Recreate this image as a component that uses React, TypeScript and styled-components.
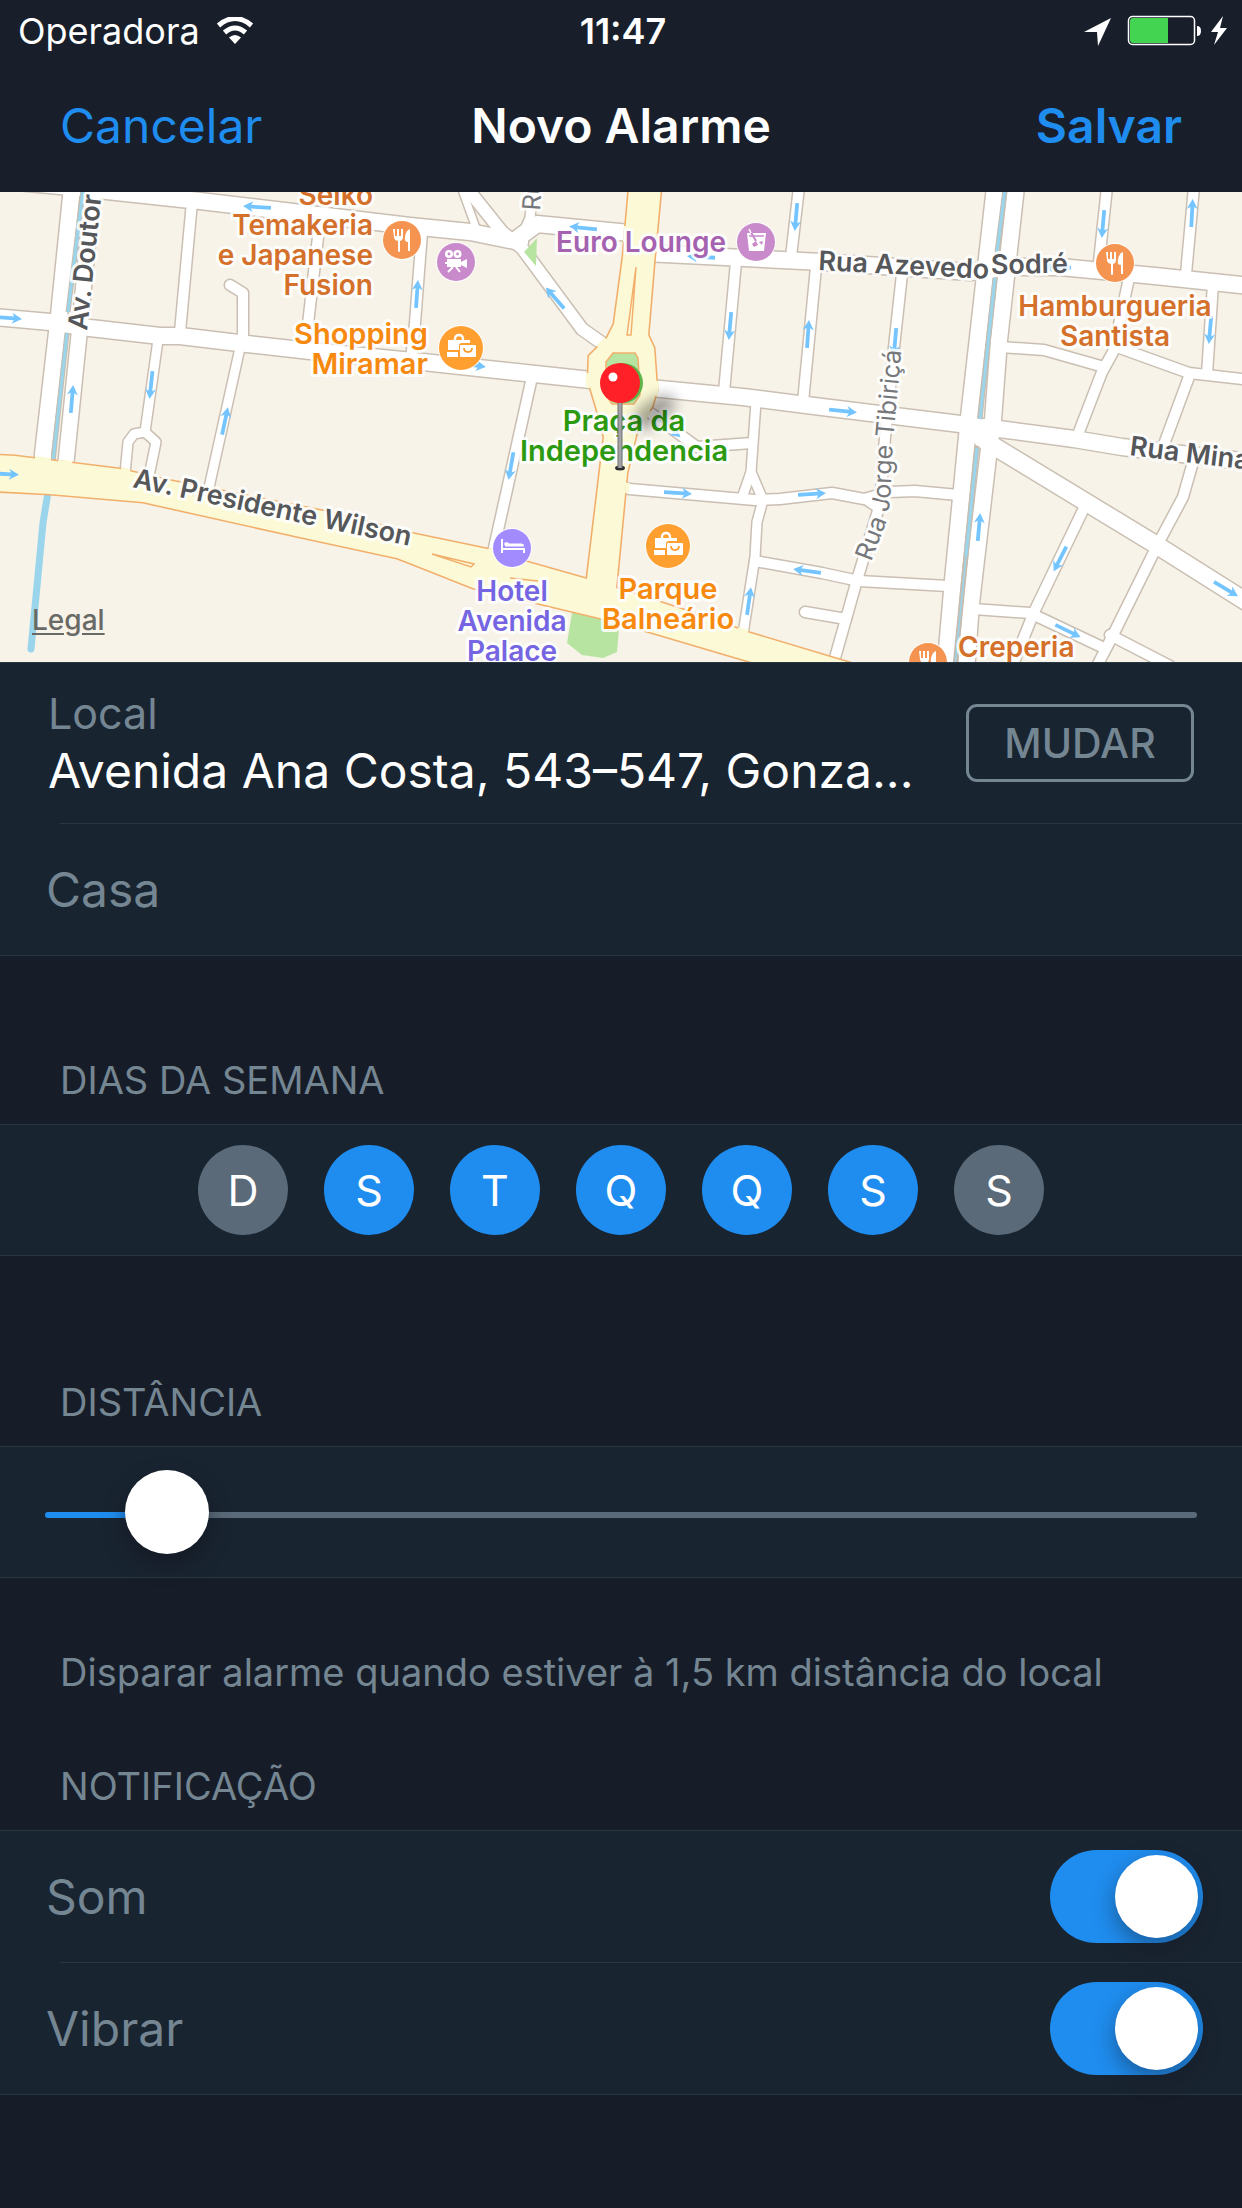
import React, { useState } from "react";
import styled, { createGlobalStyle } from "styled-components";

const color = {
  page: "#171d28",
  header: "#181f2a",
  panel: "#192431",
  line: "#2a3642",
  text: "#ffffff",
  muted: "#758693",
  idle: "#5a6a78",
  accent: "#1f8def",
};

const Global = createGlobalStyle`
  *, *::before, *::after { box-sizing: border-box; }
  body {
    margin: 0;
    background: ${color.page};
    color: ${color.text};
    font-family: Inter, "Liberation Sans", sans-serif;
    -webkit-font-smoothing: antialiased;
  }
  button, input { font: inherit; }
`;

const Screen = styled.div`
  min-height: 100vh;
  background: ${color.page};
`;

/* ---------- header ---------- */

const Header = styled.header`
  background: ${color.header};
`;

const StatusBar = styled.div`
  display: grid;
  grid-template-columns: 1fr auto 1fr;
  align-items: center;
  height: 60px;
  padding: 2px 14px 0 18px;
  font-size: 36px;
  line-height: 44px;
`;

const Carrier = styled.div`
  display: flex;
  align-items: center;
  gap: 16px;
`;

const Clock = styled.time`
  font-weight: 600;
`;

const StatusIcons = styled.div`
  display: flex;
  align-items: center;
  justify-content: flex-end;
`;

const NavBar = styled.nav`
  display: grid;
  grid-template-columns: 1fr auto 1fr;
  align-items: center;
  height: 132px;
  padding: 0 60px;
`;

const Title = styled.h1`
  margin: 0;
  font-size: 48px;
  line-height: 60px;
  font-weight: 600;
`;

const NavButton = styled.button<{ $primary?: boolean }>`
  justify-self: ${(p) => (p.$primary ? "end" : "start")};
  padding: 0;
  border: 0;
  background: none;
  color: ${color.accent};
  font-size: 48px;
  line-height: 60px;
  font-weight: ${(p) => (p.$primary ? 600 : 400)};
  cursor: pointer;
`;

/* ---------- map ---------- */

const MapFrame = styled.div`
  position: relative;
  overflow: hidden;
`;

const MapCanvas = styled.svg`
  display: block;
  width: 100%;
  height: auto;
`;

const LegalLink = styled.a`
  position: absolute;
  left: 32px;
  bottom: 26px;
  color: #696965;
  font-size: 28px;
  line-height: 32px;
  font-weight: 500;
  text-underline-offset: 3px;
`;

/* ---------- form ---------- */

const Panel = styled.div`
  background: ${color.panel};
  border: solid ${color.line};
  border-width: 1px 0;
`;

const Row = styled.div`
  display: flex;
  align-items: center;
  justify-content: space-between;
  min-height: 131px;
  padding: 0 39px 0 46px;
`;

const Divider = styled.hr`
  height: 1px;
  margin: 0 0 0 60px;
  border: 0;
  background: ${color.line};
`;

const PlaceRow = styled(Row)`
  gap: 40px;
  min-height: 160px;
  padding: 0 48px;
`;

const Place = styled.div`
  flex: 1;
  min-width: 0;
`;

const PlaceLabel = styled.div`
  color: ${color.muted};
  font-size: 43px;
  line-height: 56px;
`;

const PlaceValue = styled.div`
  overflow: hidden;
  font-size: 48px;
  line-height: 60px;
  white-space: nowrap;
  text-overflow: ellipsis;
`;

const ChangeButton = styled.button`
  width: 228px;
  height: 78px;
  border: 3px solid ${color.muted};
  border-radius: 11px;
  background: none;
  color: ${color.muted};
  font-size: 41px;
  line-height: 48px;
  font-weight: 500;
  cursor: pointer;
`;

const NameInput = styled.input`
  width: 100%;
  padding: 0;
  border: 0;
  outline: 0;
  background: none;
  color: ${color.text};
  font-size: 48px;
  line-height: 60px;
  &::placeholder { color: ${color.muted}; opacity: 1; }
`;

const SectionTitle = styled.h2<{ $space: number }>`
  margin: 0;
  padding: ${(p) => p.$space}px 60px 20px;
  color: ${color.muted};
  font-size: 38px;
  line-height: 48px;
  font-weight: 400;
`;

const Hint = styled.p`
  margin: 0;
  padding: 70px 60px 0;
  color: ${color.muted};
  font-size: 38px;
  line-height: 48px;
`;

const Days = styled.div`
  display: flex;
  align-items: center;
  justify-content: center;
  gap: 36px;
  min-height: 130px;
`;

const Day = styled.button`
  width: 90px;
  height: 90px;
  padding: 0;
  border: 0;
  border-radius: 50%;
  background: ${color.idle};
  color: ${color.text};
  font-size: 43px;
  line-height: 90px;
  cursor: pointer;
  &[aria-pressed="true"] { background: ${color.accent}; }
`;

const Slider = styled.input`
  appearance: none;
  width: 100%;
  height: 84px;
  margin: 0;
  background: none;
  cursor: pointer;
  &::-webkit-slider-runnable-track {
    height: 6px;
    border-radius: 3px;
    background: linear-gradient(
      to right,
      ${color.accent} var(--filled),
      ${color.idle} var(--filled)
    );
  }
  &::-webkit-slider-thumb {
    appearance: none;
    width: 84px;
    height: 84px;
    margin-top: -42px;
    border-radius: 50%;
    background: #ffffff;
    box-shadow: 0 10px 20px rgba(16, 18, 28, 0.55);
  }
`;

const SliderRow = styled(Row)`
  min-height: 130px;
  padding: 6px 45px 0;
`;

const SwitchLabel = styled.label`
  color: ${color.muted};
  font-size: 48px;
  line-height: 60px;
`;

const Switch = styled.input`
  appearance: none;
  display: flex;
  width: 153px;
  height: 93px;
  margin: 0;
  padding: 5px;
  border-radius: 47px;
  background: ${color.idle};
  cursor: pointer;
  &::before {
    content: "";
    width: 83px;
    height: 83px;
    border-radius: 50%;
    background: #ffffff;
    box-shadow: 0 9px 22px rgba(20, 20, 30, 0.4);
  }
  &:checked {
    justify-content: flex-end;
    background: ${color.accent};
  }
`;

/* ---------- map data ---------- */

type Road = { d: string; w: number };

const roads: Road[] = [
  { d: "M-5-12 L60-6 L200 9 L410 34 L470 40 L520 50", w: 16 },
  { d: "M518 46 L537 32 L640 42", w: 16 },
  { d: "M645 61 L822 70 L970 80 L1015 75 L1060 75 L1155 84 L1250 94", w: 16 },
  { d: "M-5 125 L50 130 L90 136 L160 144 L180 144 L247 152 L310 159 L423 170 L600 189", w: 16 },
  { d: "M650 196 L743 205 L822 215 L960 232 L999 237 L1074 247 L1122 255 L1250 270", w: 16 },
  { d: "M72-5 L59 123 L43 262 L43 275", w: 16 },
  { d: "M93-5 L79 143 L65 280", w: 15 },
  { d: "M192 10 L180 140", w: 10 },
  { d: "M230 93 L243 101 L243 150", w: 10 },
  { d: "M320 22 L318 45 L305 158", w: 10 },
  { d: "M422 40 L415 131 L411 168", w: 10 },
  { d: "M158 148 L145 240 L134 242 L128 250 L125 282", w: 9 },
  { d: "M145 240 L156 250 L149 284", w: 9 },
  { d: "M240 156 L208 300", w: 9 },
  { d: "M532 185 L492 365", w: 10 },
  { d: "M460-8 L476 36", w: 7 },
  { d: "M466-5 L502 40 L522 56 L582 137 L606 154", w: 12 },
  { d: "M533-5 L530 26 L520 48", w: 9 },
  { d: "M618 296 L755 308 L780 307 L832 301 L864 307 L889 300 L915 299 L958 303", w: 10 },
  { d: "M864 307 L880 318", w: 8 },
  { d: "M756 210 L751 280 L743 303", w: 9 },
  { d: "M751 280 L763 308 L757 330 L755 365 L743 442", w: 9 },
  { d: "M645 217 L697 255 L752 251", w: 10 },
  { d: "M736 70 L724 200", w: 10 },
  { d: "M816 75 L803 210", w: 10 },
  { d: "M799-5 L791 65", w: 10 },
  { d: "M755 369 L822 381 L859 389 L948 394", w: 10 },
  { d: "M805 420 L846 427", w: 10 },
  { d: "M902 82 L894 155 L885 245 L880 312 L857 388 L831 480", w: 10 },
  { d: "M995-5 L969 225 L967 245 L953 388 L945 480", w: 16 },
  { d: "M1016-5 L999 148 L993 228 L988 265 L971 411 L966 480", w: 16 },
  { d: "M982 247 L1084 309 L1158 354 L1250 412", w: 17 },
  { d: "M1000 155 L1044 158 L1104 175", w: 10 },
  { d: "M1129 86 L1113 160 L1102 180 L1077 245", w: 10 },
  { d: "M1114 154 L1189 181 L1250 188", w: 10 },
  { d: "M1190 182 L1163 255", w: 10 },
  { d: "M1193 270 L1183 305 L1159 350", w: 10 },
  { d: "M1213 92 L1207 182", w: 10 },
  { d: "M1107-5 L1099 70", w: 10 },
  { d: "M1194-5 L1186 82", w: 10 },
  { d: "M1085 314 L1034 420 L1012 475", w: 10 },
  { d: "M974 417 L1030 421 L1104 456", w: 10 },
  { d: "M1156 356 L1112 445 L1096 476", w: 10 },
  { d: "M1110 443 L1170 474", w: 10 },
];

const wilson =
  "M-5 263 L15 264 L47 268 L120 277 L167 288 L333 321 L410 341 L487 357 L527 370 L587 387 L616 396 L687 419 L750 441 L830 465 L860 474 L765 474 L650 440 L600 426 L537 411 L473 396 L410 371 L397 366 L300 345 L143 310 L50 302 L-5 299 Z";

const anaCosta =
  "M629-4 L623 65 L614 132 L607 146 L589 164 L588 188 L597 218 L604 245 L587 387 L586 400 L616 400 L616 396 L627 281 L638 235 L652 215 L657 198 L654 156 L648 143 L654 71 L661-4 Z";

/* stretches of avenue kerb left open where side streets join */
const openings =
  "M588 181 V196 M657 189 L656 204 M650 219 L643 228 M628 291 L627 301 M626 34 L625 50 M653 54 L652 68 M598 155 L606 147 M35 266 L51 268 M58 270 L72 271 M121 277 L130 279 M144 282 L154 285 M204 295 L213 297 M488 358 L498 361 M738 437 L748 440";

const arrows: [number, number, number][] = [
  [257, 15, 184], [8, 126, 4], [5, 282, 3], [151, 193, 96], [72, 207, -85],
  [225, 229, -78], [417, 102, -86], [583, 36, 186], [701, 65, 183],
  [555, 106, -131], [796, 25, 95], [730, 134, 95], [808, 142, -86],
  [472, 173, 8], [511, 274, 100], [678, 301, 4], [812, 302, -4],
  [807, 379, 188], [749, 409, -82], [670, 236, 42], [843, 219, 6],
  [895, 150, 95], [1103, 32, 95], [1192, 21, -87], [1210, 138, 95],
  [979, 335, -85], [1060, 367, 117], [1068, 439, 26], [1226, 397, 31],
  [1057, 75, 183],
];

const MapLabel = styled.text<{ $tone: string; $size?: number; $light?: boolean }>`
  fill: ${(p) => p.$tone};
  font-size: ${(p) => p.$size ?? 27}px;
  font-weight: ${(p) => (p.$light ? 400 : 600)};
  stroke: rgba(255, 255, 255, 0.85);
  stroke-width: 6px;
  stroke-linejoin: round;
  paint-order: stroke;
`;

const tone = {
  food: "#d4702a",
  shop: "#f7890f",
  fun: "#a562b0",
  park: "#2c9a10",
  hotel: "#7565e2",
  street: "#55575a",
  minor: "#75777a",
};

type Poi = {
  lines: string[];
  x: number;
  y: number;
  size: number;
  anchor: "start" | "middle" | "end";
  tone: string;
};

const pois: Poi[] = [
  { lines: ["Seiko", "Temakeria", "e Japanese", "Fusion"], x: 373, y: 13, size: 28, anchor: "end", tone: tone.food },
  { lines: ["Shopping", "Miramar"], x: 428, y: 152, size: 29, anchor: "end", tone: tone.shop },
  { lines: ["Euro Lounge"], x: 726, y: 60, size: 28, anchor: "end", tone: tone.fun },
  { lines: ["Praça da", "Independencia"], x: 624, y: 239, size: 29, anchor: "middle", tone: tone.park },
  { lines: ["Hotel", "Avenida", "Palace"], x: 512, y: 409, size: 28, anchor: "middle", tone: tone.hotel },
  { lines: ["Parque", "Balneário"], x: 668, y: 407, size: 29, anchor: "middle", tone: tone.shop },
  { lines: ["Hamburgueria", "Santista"], x: 1115, y: 124, size: 28, anchor: "middle", tone: tone.food },
  { lines: ["Creperia"], x: 958, y: 465, size: 28, anchor: "start", tone: tone.food },
];

const Fork = () => (
  <g fill="#fff">
    <path d="M-9-11 h2 v7 h2 v-7 h2 v7 h2 v-7 h2 v8 q0 3-3 4 v10 q0 1-1 1 t-1-1 v-10 q-4-1-4-4 z" />
    <path d="M8-11 v22 h-2 v-9 q-4 0-3-5 q1-7 5-8z" />
  </g>
);

const Bags = () => (
  <g>
    <path d="M-6-8 v-1 q0-4 4-4 t4 4 v1" fill="none" stroke="#fff" strokeWidth="2.4" />
    <path d="M-13-8 h22 v3 h-8 q-3 0-3 3 v4 h-11z M-14 4 h11 v5 h-11z" fill="#fff" />
    <rect x="-1" y="-3" width="16" height="12" rx="1" fill="#fff" />
    <path d="M3 0 q0 4 4 4 t4-4" fill="none" stroke="#ff9f30" strokeWidth="1.8" />
  </g>
);

const Camera = () => (
  <g fill="#fff">
    <circle cx="-7" cy="-8" r="4" />
    <circle cx="1.500" cy="-8" r="4" />
    <path d="M-9-3 h14 v3 l6-3 v9 l-6-3 v2 h-14 v-3 h-2 v-2 h2z" />
    <path d="M-3 5 l-5 5 M0 5 l4 5" stroke="#fff" strokeWidth="2" />
    <circle cx="-7" cy="-8" r="1.400" fill="#c98acb" />
    <circle cx="1.500" cy="-8" r="1.400" fill="#c98acb" />
  </g>
);

const Drink = () => (
  <g>
    <path d="M-9-9 h19 l-2 18 h-15z" fill="#fff" />
    <path d="M-7-6 h15" stroke="#c98acb" strokeWidth="1.500" />
    <path d="M-7-13 l7 12" stroke="#c98acb" strokeWidth="2" />
    <path d="M-7-13 l2 4" stroke="#fff" strokeWidth="1.500" />
    <path d="M-4 2 l4-3 2 4-4 2z M3 0 l4-1 -1 4z" fill="#c98acb" />
  </g>
);

const Bed = () => (
  <g fill="#fff">
    <path d="M-11-9 h2 v9 h22 v5 h-2 v-3 h-20 v3 h-2z" />
    <path d="M-7-1.500 v-2 q0-2 2-2 t2 1 h12 q3 0 3 3z" />
    <circle cx="-6" cy="-4" r="1.800" />
  </g>
);

const Marker = ({ x, y, r = 18, fill, children }: {
  x: number; y: number; r?: number; fill: string; children: React.ReactNode;
}) => (
  <g transform={`translate(${x} ${y})`}>
    <circle r={r + 2} fill="#fff" opacity="0.8" />
    <circle r={r + 1} fill={fill} />
    {children}
  </g>
);

const CityMap = () => (
  <MapCanvas viewBox="0 0 1242 470" role="img" aria-label="Mapa do local">
    <defs>
      <filter id="soft" x="-50%" y="-50%" width="200%" height="200%">
        <feGaussianBlur stdDeviation="7" />
      </filter>
      <path id="jorge" d="M871 370 L886 331 L890 311 L893 248 L904 130" />
    </defs>
    <rect width="1242" height="470" fill="#f7f3e9" />
    <path d="M573 415 L620 425 L617 460 L603 466 L582 463 L567 451z" fill="#b7e5a1" />

    <g fill="none" stroke="#cabfb2" strokeLinejoin="round" strokeLinecap="round">
      {roads.map((r) => <path key={r.d} d={r.d} strokeWidth={r.w + 3} />)}
    </g>
    <g fill="none" stroke="#fff" strokeLinejoin="round" strokeLinecap="round">
      {roads.map((r) => <path key={r.d} d={r.d} strokeWidth={r.w} />)}
    </g>
    <path d="M537 46 L536 74 L524 60z" fill="#b7e5a1" />

    <g fill="none" stroke="#c5bcb0" strokeWidth="5">
      <path d="M83-2 L68 120 M67 141 L53 270" />
      <path d="M1005-2 L996 68 M995 86 L980 227 M977 254 L955 474" />
    </g>
    <g fill="none" stroke="#9ad5ec">
      <path d="M83-2 L68 120 M67 141 L53 270" strokeWidth="3" />
      <path d="M1005-2 L996 68 M995 86 L980 227" strokeWidth="3" />
      <path d="M977 256 L966 364" strokeWidth="3" />
      <path d="M966 364 L955 474" strokeWidth="1.500" />
      <path d="M48 300 L43 331 L31 457" strokeWidth="7" strokeLinecap="round" />
    </g>

    <g fill="#fcfad6" stroke="#f2af6c" strokeWidth="3.200">
      <path d={wilson} />
      <path d={anaCosta} />
    </g>
    <g fill="#fcfad6">
      <path d={wilson} />
      <path d={anaCosta} />
    </g>
    <path d={openings} fill="none" stroke="#fcfad6" strokeWidth="4" />
    <g fill="none" stroke="#f2af6c" strokeWidth="1.500">
      <path d="M636 75 L631 143 L627 143z M432 362 L474 372 L471 375z M510 386 L538 389" />
    </g>
    <path d="M606 170 L613 161 L635 161 L638 166 L640 203 L634 212 L612 212 L606 203z" fill="#b7e5a1" stroke="#f2af6c" strokeWidth="1.500" />

    <g fill="#74c5ff">
      {arrows.map(([x, y, a]) => (
        <path
          key={`${x}-${y}`}
          transform={`translate(${x} ${y}) rotate(${a})`}
          d="M-14-1.900 L6-1.900 L4-5.500 L14 0 L4 5.500 L6 1.900 L-14 1.900z"
        />
      ))}
    </g>

    <MapLabel $tone={tone.street} transform="translate(87 139) rotate(-84)">Av. Doutor</MapLabel>
    <MapLabel $tone={tone.street} transform="translate(132 295) rotate(12)">Av. Presidente Wilson</MapLabel>
    <MapLabel $tone={tone.street} transform="translate(818 78) rotate(3)">Rua Azevedo</MapLabel>
    <MapLabel $tone={tone.street} transform="translate(991 82) rotate(-1)">Sodré</MapLabel>
    <MapLabel $tone={tone.street} transform="translate(1129 263) rotate(7)">Rua Minas</MapLabel>
    <MapLabel $tone={tone.minor} $size={25} $light transform="translate(540 19) rotate(-86)">Ru</MapLabel>
    <MapLabel $tone={tone.minor} $size={25} $light>
      <textPath href="#jorge">Rua Jorge Tibiriçá</textPath>
    </MapLabel>

    <circle cx="623" cy="191" r="20" fill="#5fb548" />
    {pois.map((p) => (
      <MapLabel key={p.lines[0]} $tone={p.tone} $size={p.size} textAnchor={p.anchor}>
        {p.lines.map((line, i) => (
          <tspan key={line} x={p.x} y={p.y + i * 30}>{line}</tspan>
        ))}
      </MapLabel>
    ))}

    <Marker x={402} y={48} fill="#f59450"><Fork /></Marker>
    <Marker x={1115} y={71} fill="#f59450"><Fork /></Marker>
    <Marker x={928} y={470} fill="#f59450"><Fork /></Marker>
    <Marker x={456} y={70} fill="#c98acb"><Camera /></Marker>
    <Marker x={756} y={50} fill="#c98acb"><Drink /></Marker>
    <Marker x={461} y={156} r={21} fill="#ff9f30"><Bags /></Marker>
    <Marker x={668} y={354} r={21} fill="#ff9f30"><Bags /></Marker>
    <Marker x={512} y={356} fill="#a28bff"><Bed /></Marker>

    <ellipse cx="654" cy="220" rx="24" ry="12" fill="#000" opacity="0.35" filter="url(#soft)" transform="rotate(-35 654 220)" />
    <ellipse cx="620" cy="276" rx="5" ry="2.500" fill="#2c2c2c" />
    <path d="M620 208 V276" stroke="#6f7072" strokeWidth="5" />
    <path d="M620 208 V276" stroke="#a3a3a6" strokeWidth="3" />
    <circle cx="620" cy="191" r="20" fill="#ff2127" />
    <circle cx="613" cy="185" r="4.500" fill="#fff" />
  </MapCanvas>
);

/* ---------- screen ---------- */

const week = [
  { letter: "D", name: "Domingo" },
  { letter: "S", name: "Segunda" },
  { letter: "T", name: "Terça" },
  { letter: "Q", name: "Quarta" },
  { letter: "Q", name: "Quinta" },
  { letter: "S", name: "Sexta" },
  { letter: "S", name: "Sábado" },
];

const MAX_KM = 20;

export default function App() {
  const [active, setActive] = useState([false, true, true, true, true, true, false]);
  const [km, setKm] = useState(1.5);
  const [sound, setSound] = useState(true);
  const [vibrate, setVibrate] = useState(true);

  const toggleDay = (index: number) =>
    setActive(active.map((on, i) => (i === index ? !on : on)));

  return (
    <Screen>
      <Global />
      <Header>
        <StatusBar>
          <Carrier>
            <span>Operadora</span>
            <svg width="38" height="28" viewBox="0 0 38 28" aria-hidden="true">
              <path d="M2.500 8.500 Q19-5.500 35.500 8.500" fill="none" stroke="#fff" strokeWidth="5" />
              <path d="M8.500 15.500 Q19 6.500 29.500 15.500" fill="none" stroke="#fff" strokeWidth="5" />
              <path d="M13 20.500 Q19 15.500 25 20.500 L19 27z" fill="#fff" />
            </svg>
          </Carrier>
          <Clock>11:47</Clock>
          <StatusIcons>
            <svg width="144" height="32" viewBox="0 0 144 32" aria-hidden="true">
              <path d="M27 3 L0 17 L13 17 L14 31z" fill="#fff" />
              <rect x="44.500" y="1.500" width="66" height="28" rx="4" fill="none" stroke="#fff" strokeWidth="1.500" />
              <path d="M84 3 v25 h-35 q-3 0-3-3 v-19 q0-3 3-3z" fill="#43d551" />
              <path d="M113 11 q4 0 4 5 t-4 5z" fill="#fff" />
              <path d="M139 1 L127 17 L134 17 L130 30 L143 13 L136 13z" fill="#fff" />
            </svg>
          </StatusIcons>
        </StatusBar>
        <NavBar>
          <NavButton type="button">Cancelar</NavButton>
          <Title>Novo Alarme</Title>
          <NavButton type="button" $primary>Salvar</NavButton>
        </NavBar>
      </Header>

      <main>
        <MapFrame>
          <CityMap />
          <LegalLink href="#legal">Legal</LegalLink>
        </MapFrame>

        <Panel>
          <PlaceRow>
            <Place>
              <PlaceLabel>Local</PlaceLabel>
              <PlaceValue>Avenida Ana Costa, 543–547, Gonza...</PlaceValue>
            </Place>
            <ChangeButton type="button">MUDAR</ChangeButton>
          </PlaceRow>
          <Divider />
          <Row>
            <NameInput type="text" placeholder="Casa" aria-label="Nome do alarme" />
          </Row>
        </Panel>

        <section>
          <SectionTitle $space={100}>DIAS DA SEMANA</SectionTitle>
          <Panel>
            <Days>
              {week.map((day, i) => (
                <Day
                  key={day.name}
                  type="button"
                  title={day.name}
                  aria-pressed={active[i]}
                  onClick={() => toggleDay(i)}
                >
                  {day.letter}
                </Day>
              ))}
            </Days>
          </Panel>
        </section>

        <section>
          <SectionTitle $space={122}>
            <label htmlFor="distance">DISTÂNCIA</label>
          </SectionTitle>
          <Panel>
            <SliderRow>
              <Slider
                id="distance"
                type="range"
                min={0}
                max={MAX_KM}
                step={0.5}
                value={km}
                onChange={(e) => setKm(Number(e.target.value))}
                style={{ "--filled": `${(km / MAX_KM) * 100}%` } as React.CSSProperties}
              />
            </SliderRow>
          </Panel>
          <Hint>
            {`Disparar alarme quando estiver à ${String(km).replace(".", ",")} km distância do local`}
          </Hint>
        </section>

        <section>
          <SectionTitle $space={66}>NOTIFICAÇÃO</SectionTitle>
          <Panel>
            <Row>
              <SwitchLabel htmlFor="sound">Som</SwitchLabel>
              <Switch id="sound" type="checkbox" role="switch" checked={sound} onChange={() => setSound(!sound)} />
            </Row>
            <Divider />
            <Row>
              <SwitchLabel htmlFor="vibrate">Vibrar</SwitchLabel>
              <Switch id="vibrate" type="checkbox" role="switch" checked={vibrate} onChange={() => setVibrate(!vibrate)} />
            </Row>
          </Panel>
        </section>
      </main>
    </Screen>
  );
}
